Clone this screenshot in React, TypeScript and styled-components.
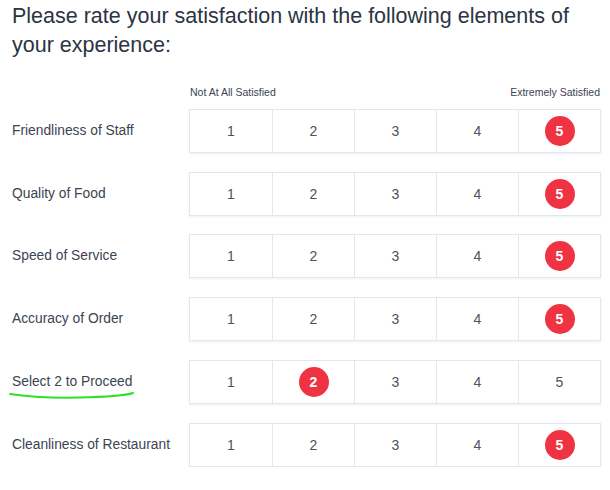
import React from "react";
import styled, { createGlobalStyle } from "styled-components";

const Global = createGlobalStyle`
  html, body { margin: 0; padding: 0; background: #ffffff; }
  body { font-family: "Liberation Sans", Arial, sans-serif; }
`;

const Page = styled.div`
  padding: 2px 10px 0 12px;
  width: 610px;
  box-sizing: border-box;
`;

const Title = styled.h1`
  margin: 0;
  font-size: 21.5px;
  line-height: 29px;
  font-weight: 400;
  color: #2b3442;
`;

const Survey = styled.div`
  margin-top: 26px;
  display: grid;
  grid-template-columns: 177px 412px;
  row-gap: 18.8px;
  align-items: center;
`;

const ScaleHeader = styled.div`
  grid-column: 2;
  display: flex;
  justify-content: space-between;
  font-size: 10.5px;
  line-height: 13px;
  color: #3b4452;
  padding: 0 1px 0 1px;
  margin-bottom: -9px;
`;

const RowLabel = styled.div`
  position: relative;
  font-size: 13.8px;
  line-height: 16px;
  color: #3b4452;
`;

const Underline = styled.svg`
  position: absolute;
  left: -3px;
  top: 17px;
  width: 130px;
  height: 10px;
  overflow: visible;
`;

const Scale = styled.div`
  display: grid;
  grid-template-columns: repeat(5, 1fr);
  height: 44px;
  border: 1px solid #e2e7ef;
  box-sizing: border-box;
  box-shadow: 0 1px 2px rgba(30, 45, 70, 0.08);
  background: #fff;
`;

const Cell = styled.div`
  display: flex;
  align-items: center;
  justify-content: center;
  border-left: 1px solid #e2e7ef;
  &:first-child { border-left: none; }
  font-size: 14px;
  color: #4a5362;
`;

const Selected = styled.span`
  width: 30px;
  height: 30px;
  border-radius: 50%;
  background: #ef3342;
  color: #ffffff;
  font-weight: 700;
  font-size: 14px;
  display: flex;
  align-items: center;
  justify-content: center;
`;

const rows: { label: string; value: number; underline?: boolean }[] = [
  { label: "Friendliness of Staff", value: 5 },
  { label: "Quality of Food", value: 5 },
  { label: "Speed of Service", value: 5 },
  { label: "Accuracy of Order", value: 5 },
  { label: "Select 2 to Proceed", value: 2, underline: true },
  { label: "Cleanliness of Restaurant", value: 5 },
];

export default function App() {
  return (
    <>
      <Global />
      <Page>
        <Title>
          Please rate your satisfaction with the following elements of your experience:
        </Title>
        <Survey>
          <ScaleHeader>
            <span>Not At All Satisfied</span>
            <span>Extremely Satisfied</span>
          </ScaleHeader>
          {rows.map((r) => (
            <React.Fragment key={r.label}>
              <RowLabel>
                {r.label}
                {r.underline && (
                  <Underline viewBox="0 0 130 10">
                    <path
                      d="M1 3 C 20 6, 45 7, 70 6.5 S 115 5, 124 2"
                      fill="none"
                      stroke="#2fe02a"
                      strokeWidth="2"
                      strokeLinecap="round"
                    />
                  </Underline>
                )}
              </RowLabel>
              <Scale>
                {[1, 2, 3, 4, 5].map((n) => (
                  <Cell key={n}>
                    {n === r.value ? <Selected>{n}</Selected> : n}
                  </Cell>
                ))}
              </Scale>
            </React.Fragment>
          ))}
        </Survey>
      </Page>
    </>
  );
}
